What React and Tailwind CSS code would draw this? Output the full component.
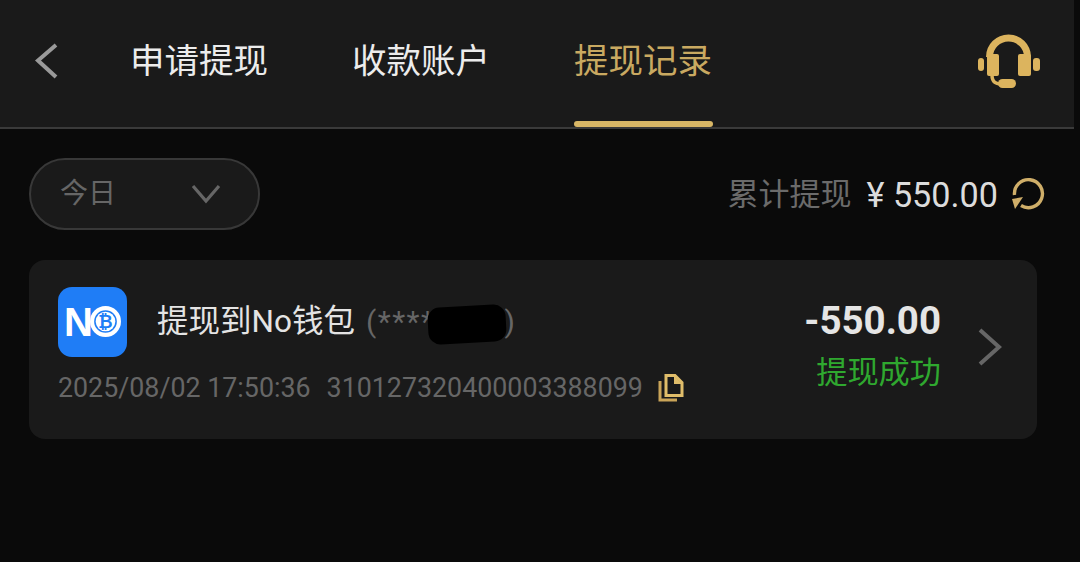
import React from 'react';

const fontStack = { fontFamily: '"Roboto", "Noto Sans CJK SC", sans-serif' };

const HeadsetIcon = () => (
  <svg width="62" height="55" viewBox="0 0 62 55" fill="#dcb45e">
    <path d="M11.5 24A19 19 0 0 1 49.5 24" fill="none" stroke="#dcb45e" strokeWidth="7" />
    <rect x="9" y="21" width="12" height="22" rx="2" />
    <rect x="40" y="21" width="13" height="22" rx="2" />
    <rect x="0" y="25" width="6" height="13" rx="3" />
    <rect x="55" y="25" width="7" height="13" rx="3" />
    <path d="M14 42C14 49 18 52 25 50.5" fill="none" stroke="#dcb45e" strokeWidth="3.5" />
    <rect x="20" y="46" width="18" height="9" rx="4.5" />
  </svg>
);

const RefreshIcon = () => (
  <svg width="33" height="33" viewBox="0 0 33 33" fill="none">
    <path d="M2.5 18A14 14 0 1 1 9 28.5" stroke="#cfae69" strokeWidth="3.4" />
    <path d="M0 22L11 20L3 32Z" fill="#cfae69" />
  </svg>
);

const CopyIcon = () => (
  <svg width="26" height="28" viewBox="0 0 26 28" fill="none">
    <path d="M2 7V26H19" stroke="#c9a458" strokeWidth="3" />
    <path d="M8 1.5H17L24 8.5V21.5H8Z" stroke="#e0bd6a" strokeWidth="3" fill="#1a1a1a" />
    <path d="M16 2V10H24Z" fill="#e0bd6a" />
  </svg>
);

const NoLogo = () => (
  <div className="flex h-[70px] w-[69px] shrink-0 items-center justify-center rounded-[14px] bg-[#1f7df6] pb-[1px]">
    <span className="text-[40px] leading-none font-black text-white" style={{ fontFamily: '"Liberation Sans", sans-serif' }}>N</span>
    <svg width="31" height="31" viewBox="0 0 30 30" className="-ml-[3px]">
      <circle cx="15" cy="15" r="13" fill="none" stroke="#fff" strokeWidth="4" />
      <circle cx="15" cy="15" r="9.5" fill="#fff" />
      <text x="15" y="21" textAnchor="middle" fontSize="17" fontWeight="700" fill="#1f7df6" fontFamily="Liberation Sans, sans-serif">₿</text>
    </svg>
  </div>
);

export default function App() {
  return (
    <div className="h-[562px] w-[1080px] overflow-hidden bg-[#0a0a0a]" style={fontStack}>
      {/* Top tabs */}
      <div className="relative flex h-[129px] w-[1074px] items-center border-b-2 border-[#3a3a3a] bg-[#1a1a1a] pb-[4px]">
        <svg width="26" height="38" viewBox="0 0 26 38" fill="none" className="-mt-[2px] ml-[34px]">
          <path d="M22 3L4 18.5L22 35" stroke="#9a9a9a" strokeWidth="4" />
        </svg>
        <span className="ml-[70px] text-[34.5px] leading-none text-[#ececec]">申请提现</span>
        <span className="ml-[84px] text-[34.5px] leading-none text-[#ececec]">收款账户</span>
        <span className="relative ml-[84px] text-[34.5px] leading-none text-[#c9a961]">
          提现记录
          <span className="absolute top-[77px] left-0 h-[6px] w-[139px] rounded-full bg-[#d9b766]" />
        </span>
        <div className="-mt-[2px] mr-[34px] ml-auto">
          <HeadsetIcon />
        </div>
      </div>

      {/* Filter row */}
      <div className="mt-[29px] flex w-[1074px] items-center justify-between pr-[29px] pl-[29px]">
        <div className="flex h-[72px] w-[231px] items-center justify-between rounded-full border-2 border-[#383838] bg-[#1a1a1a] pr-[37px] pl-[29px]">
          <span className="text-[28px] leading-none text-[#666666]">今日</span>
          <svg width="30" height="20" viewBox="0 0 30 20" fill="none">
            <path d="M2 2L15 17L28 2" stroke="#666666" strokeWidth="3.2" />
          </svg>
        </div>
        <div className="flex items-center">
          <span className="mt-[2px] text-[31px] leading-none text-[#6b6b6b]">累计提现</span>
          <span className="mt-[2px] ml-[15px] text-[34.2px] leading-none text-[#dcdcdc]">¥ 550.00</span>
          <div className="ml-[14px]">
            <RefreshIcon />
          </div>
        </div>
      </div>

      {/* Record card */}
      <div className="relative mt-[30px] ml-[29px] flex h-[179px] w-[1008px] items-start rounded-[16px] bg-[#1a1a1a] pt-[27px] pr-[34px] pl-[29px]">
        <div className="flex-1">
          <div className="flex items-center">
            <NoLogo />
            <span className="ml-[30px] text-[31.5px] leading-none text-[#e4e4e4]">提现到No钱包</span>
            <span className="relative ml-[11px] text-[30px] leading-none tracking-[1.5px] text-[#666666]">
              (****
              <span className="inline-block w-[69px]" />)
              <span className="absolute -top-[1px] left-[62px] h-[37px] w-[78px] -rotate-3 rounded-[12px] bg-black" />
            </span>
          </div>
          <div className="mt-[17px] flex items-center text-[26.8px] leading-none text-[#666666]">
            <span>2025/08/02 17:50:36</span>
            <span className="ml-[16px]">310127320400003388099</span>
            <div className="ml-[15px]">
              <CopyIcon />
            </div>
          </div>
        </div>
        <div className="mt-[15px] flex flex-col items-end">
          <span className="text-[38.5px] leading-none font-bold text-[#e5e5e5]">-550.00</span>
          <span className="mt-[16px] text-[31.2px] leading-none text-[#2fa82f]">提现成功</span>
        </div>
        <svg width="26" height="40" viewBox="0 0 26 40" fill="none" className="mt-[40px] ml-[36px]">
          <path d="M3 3L22 20L3 37" stroke="#666666" strokeWidth="4" />
        </svg>
      </div>
    </div>
  );
}
